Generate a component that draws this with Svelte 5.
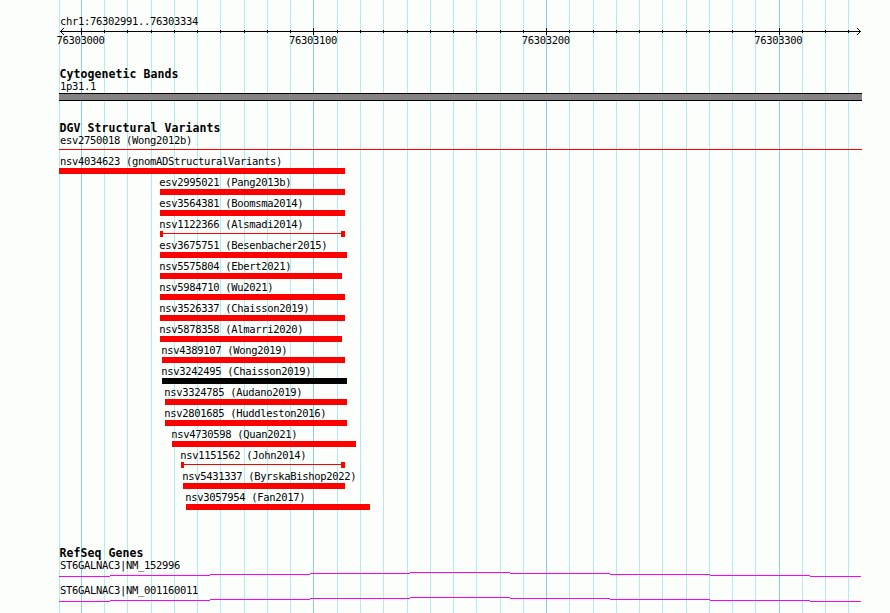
<script>
  const minor = [59, 104, 127, 151, 174, 197, 220, 244, 267, 290, 337, 360, 383, 407, 430, 453, 476, 500, 523, 569, 593, 616, 639, 662, 686, 709, 732, 755, 802, 825, 848];
  const major = [
    { x: 81, label: '76303000' },
    { x: 313, label: '76303100' },
    { x: 546, label: '76303200' },
    { x: 779, label: '76303300' }
  ];
  // start and end are pixel columns on the plot
  const variants = [
    { name: 'esv2750018 (Wong2012b)', start: 59, end: 862, kind: 'line' },
    { name: 'nsv4034623 (gnomADStructuralVariants)', start: 59, end: 345 },
    { name: 'esv2995021 (Pang2013b)', start: 160, end: 345 },
    { name: 'esv3564381 (Boomsma2014)', start: 160, end: 345 },
    { name: 'nsv1122366 (Alsmadi2014)', start: 160, end: 345, kind: 'capped' },
    { name: 'esv3675751 (Besenbacher2015)', start: 160, end: 347 },
    { name: 'nsv5575804 (Ebert2021)', start: 160, end: 342 },
    { name: 'nsv5984710 (Wu2021)', start: 160, end: 345 },
    { name: 'nsv3526337 (Chaisson2019)', start: 160, end: 345 },
    { name: 'nsv5878358 (Almarri2020)', start: 160, end: 342 },
    { name: 'nsv4389107 (Wong2019)', start: 162, end: 345 },
    { name: 'nsv3242495 (Chaisson2019)', start: 162, end: 347, kind: 'dark' },
    { name: 'nsv3324785 (Audano2019)', start: 165, end: 347 },
    { name: 'nsv2801685 (Huddleston2016)', start: 165, end: 347 },
    { name: 'nsv4730598 (Quan2021)', start: 172, end: 356 },
    { name: 'nsv1151562 (John2014)', start: 181, end: 345, kind: 'capped' },
    { name: 'nsv5431337 (ByrskaBishop2022)', start: 183, end: 345 },
    { name: 'nsv3057954 (Fan2017)', start: 186, end: 370 }
  ];
  const genes = ['ST6GALNAC3|NM_152996', 'ST6GALNAC3|NM_001160011'];
  const steps = [[59, 110, 4], [110, 210, 3], [210, 310, 2], [310, 410, 1], [410, 510, 0], [510, 610, 1], [610, 710, 2], [710, 810, 3], [810, 861, 4]];
</script>

<main class="browser">
  <svg class="grid" width="890" height="613" shape-rendering="crispEdges">
    {#each minor as x}<rect {x} y="0" width="1" height="613" fill="#afeeee" />{/each}
    {#each major as m}<rect x={m.x} y="0" width="1" height="613" fill="#87ceeb" />{/each}
  </svg>

  <header class="ruler">
    <div class="label region">chr1:76302991..76303334</div>
    <svg class="axis" width="890" height="7" shape-rendering="crispEdges">
      <rect x="60" y="3" width="801" height="1" />
      {#each minor.slice(1) as x}<rect {x} y="2" width="1" height="3" />{/each}
      {#each major as m}<rect x={m.x} y="0" width="1" height="7" />{/each}
      {#each [1, 2, 3] as d}
        <rect x={60 + d} y={3 - d} width="1" height="1" />
        <rect x={60 + d} y={3 + d} width="1" height="1" />
        <rect x={860 - d} y={3 - d} width="1" height="1" />
        <rect x={860 - d} y={3 + d} width="1" height="1" />
      {/each}
    </svg>
    <div class="numbers">
      {#each major as m}<span class="label">{m.label}</span>{/each}
    </div>
  </header>

  <section class="track cyto">
    <h2>Cytogenetic Bands</h2>
    <div class="label">1p31.1</div>
    <div class="band"></div>
  </section>

  <section class="track dgv">
    <h2>DGV Structural Variants</h2>
    {#each variants as v}
      <div class="variant" style="margin-left: {v.start - 59}px">
        <div class="label" class:flush={v.start > 59}>{v.name}</div>
        <div class="bar {v.kind ?? 'solid'}" style="width: {v.end - v.start}px"></div>
      </div>
    {/each}
  </section>

  <section class="track genes">
    <h2>RefSeq Genes</h2>
    {#each genes as gene}
      <div class="gene">
        <div class="label">{gene}</div>
        <svg width="803" height="5" shape-rendering="crispEdges">
          {#each steps as [a, b, y]}<rect x={a - 59} {y} width={b - a} height="1" fill="#f0f" />{/each}
        </svg>
      </div>
    {/each}
  </section>
</main>

<style>
  :global(body) { margin: 0; background: #fcfefc; }
  .browser {
    position: relative;
    width: 890px;
    height: 613px;
    overflow: hidden;
    background: #fcfefc;
    color: #000;
    font-family: "DejaVu Sans Mono", "Liberation Mono", monospace;
  }
  .grid { position: absolute; inset: 0; display: block; }
  .ruler, .track { position: relative; }
  svg { display: block; }
  .label {
    height: 13px;
    padding-left: 1px;
    font-size: 10.5px;
    line-height: 13px;
    letter-spacing: -0.321px;
    white-space: pre;
  }
  .label.flush { padding-left: 0; margin-left: -0.7px; }
  h2 {
    height: 13px;
    margin: 0;
    padding-left: 0.4px;
    font-size: 11.5px;
    line-height: 15px;
    font-weight: bold;
    letter-spacing: 0.077px;
    white-space: pre;
  }
  .ruler { height: 67px; padding-top: 15px; box-sizing: border-box; }
  .region { margin-left: 59px; }
  .numbers { display: flex; gap: 184.6px; padding-left: 56.5px; margin-top: -1px; }
  .numbers .label { width: 48px; padding: 0; }
  .track { margin-left: 59px; width: 803px; }
  .cyto { height: 54px; }
  .band {
    height: 6px;
    border: solid #000;
    border-width: 1px 0;
    background: #848284;
  }
  .dgv { height: 425px; }
  .variant { height: 21px; }
  .bar { height: 6px; background: #f00; }
  .bar.dark { background: #000; }
  .bar.line { height: 1px; margin-top: 2px; }
  .bar.capped {
    box-sizing: border-box;
    border: solid #f00;
    border-width: 0 4px 0 3px;
    background: linear-gradient(#f00, #f00) 0 2px / 100% 1px no-repeat;
  }
  .gene { height: 25px; }
</style>
